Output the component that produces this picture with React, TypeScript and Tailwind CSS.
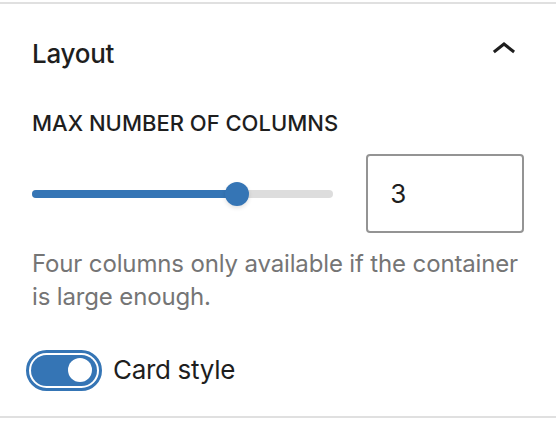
import React from 'react';

function ChevronUp() {
  return (
    <svg viewBox="0 0 24 24" className="w-[48px] h-[48px] -mt-[4px]" fill="#1e1e1e" aria-hidden="true">
      <path d="M6.5 12.4L12 8l5.5 4.4-.9 1.2L12 10l-4.6 3.6-1-1.2z" />
    </svg>
  );
}

function ColumnsSlider({ value }: { value: number }) {
  const thumbLeft = 193;
  return (
    <div className="relative w-[304px] h-[24px] flex items-center">
      <div className="w-full h-[8px] rounded-full bg-[#dddddd]" />
      <div className="absolute left-0 h-[8px] rounded-full bg-[#3575b5]" style={{ width: thumbLeft + 12 }} />
      <div
        className="absolute top-0 w-[24px] h-[24px] rounded-full bg-[#3575b5] shadow-[0_2px_4px_rgba(0,0,0,0.12)]"
        style={{ left: thumbLeft }}
        aria-label={`value ${value}`}
      />
    </div>
  );
}

function Toggle() {
  return (
    <div className="-ml-[6px] w-[76px] h-[41px] rounded-full border-[3px] border-[#3575b5] bg-white p-[2px]">
      <div className="h-full rounded-full bg-[#3575b5] flex items-center justify-end pr-[5px]">
        <span className="block w-[24px] h-[24px] rounded-full bg-white" />
      </div>
    </div>
  );
}

export default function App() {
  return (
    <div className="bg-white h-[422px] pt-[2px] text-[#1e1e1e] font-['Inter','Noto_Sans',sans-serif]">
      <div className="border-y-2 border-[#e0e0e0]">
        {/* panel header */}
        <div className="h-[96px] flex items-center justify-between pl-[32px] pr-[28px]">
          <h2 className="text-[26px] leading-none font-medium mt-[3px] tracking-[-0.01em]">Layout</h2>
          <ChevronUp />
        </div>

        <div className="px-[32px] pt-[12px] pb-[25px]">
          <div className="text-[22px] leading-[22px] font-medium">MAX NUMBER OF COLUMNS</div>

          <div className="mt-[20px] flex items-center gap-[33px]">
            <ColumnsSlider value={3} />
            <div className="w-[159px] h-[79px] border-2 border-[#949494] rounded-[4px] flex items-center pl-[22px] text-[26px]">
              3
            </div>
          </div>

          <p className="mt-[14px] text-[24px] leading-[33.4px] text-[#757575] tracking-[-0.006em]">
            Four columns only available if the container is large enough.
          </p>

          <div className="mt-[36px] h-[41px] flex items-center gap-[11px]">
            <Toggle />
            <span className="text-[26px] leading-none tracking-[-0.012em]">Card style</span>
          </div>
        </div>
      </div>
    </div>
  );
}
